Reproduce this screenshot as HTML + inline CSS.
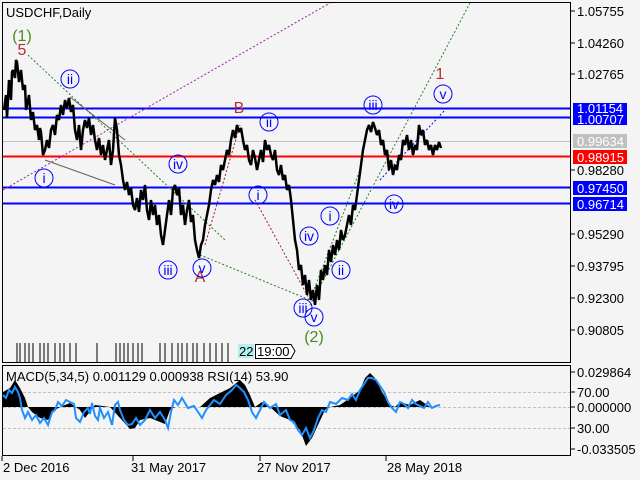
<!DOCTYPE html>
<html><head><meta charset="utf-8"><style>
html,body{margin:0;padding:0;background:#f4f4f4;}
svg{display:block;font-family:"Liberation Sans",sans-serif;}
</style></head><body>
<svg width="640" height="480" viewBox="0 0 640 480" xmlns="http://www.w3.org/2000/svg">
<rect width="640" height="480" fill="#f4f4f4"/>
<rect x="2.5" y="2.5" width="568" height="360" fill="none" stroke="#000"/>
<rect x="2.5" y="365.5" width="568" height="90" fill="none" stroke="#000"/>
<line x1="3" x2="570" y1="141.5" y2="141.5" stroke="#c0c0c0"/>
<line x1="3" x2="570" y1="108.5" y2="108.5" stroke="#0000ff" stroke-width="2"/>
<line x1="3" x2="570" y1="117.5" y2="117.5" stroke="#0000ff" stroke-width="2"/>
<line x1="3" x2="570" y1="156.5" y2="156.5" stroke="#ff0000" stroke-width="2"/>
<line x1="3" x2="570" y1="187.5" y2="187.5" stroke="#0000ff" stroke-width="2"/>
<line x1="3" x2="570" y1="203.5" y2="203.5" stroke="#0000ff" stroke-width="2"/>
<g fill="none" stroke-dasharray="2,2">
<line x1="3" y1="190" x2="330" y2="3" stroke="#a020a0"/>
<line x1="28" y1="55" x2="225" y2="240" stroke="#208020"/>
<line x1="200" y1="255" x2="310" y2="300" stroke="#208020"/>
<line x1="310" y1="305" x2="470" y2="3" stroke="#208020"/>
<line x1="310" y1="300" x2="360" y2="170" stroke="#208020"/>
<line x1="380" y1="180" x2="445" y2="110" stroke="#0000ff"/>
<line x1="205" y1="245" x2="240" y2="125" stroke="#a02020"/>
<line x1="255" y1="200" x2="310" y2="300" stroke="#a02020"/>
</g>
<polyline points="45,160 115,185" stroke="#606060" fill="none"/>
<polyline points="70,97 125,140" stroke="#606060" fill="none"/>
<polyline fill="none" stroke="#000" stroke-width="2.5" stroke-linejoin="bevel" points="4,110 6,95 7,118 9,80 11,100 12,72 13,70 15,78 16,60 17,62 19,82 21,70 23,90 25,85 26,110 27,105 29,95 31,120 33,112 35,130 37,125 39,140 40,128 41,132 43,155 45,150 47,140 49,148 51,130 53,125 55,135 57,115 59,120 61,105 63,115 65,100 67,108 69,98 71,112 73,105 75,130 77,140 79,125 81,150 83,130 85,120 87,128 89,118 91,135 93,125 95,140 97,150 99,138 101,155 103,145 105,160 107,150 109,140 111,165 113,150 115,118 117,130 119,155 121,165 123,180 125,190 127,182 129,195 131,188 133,205 135,210 137,198 139,212 141,190 143,200 145,185 147,210 149,220 151,200 153,215 155,205 157,225 159,215 161,235 163,245 165,230 167,215 169,200 171,215 173,190 175,185 177,195 179,188 181,215 183,205 185,225 187,210 189,200 191,222 193,215 195,240 197,250 199,258 201,245 203,240 205,225 207,215 209,205 211,190 213,180 215,185 217,175 219,182 221,165 223,170 225,160 227,150 229,155 231,140 233,130 235,138 237,125 239,132 241,128 243,140 245,150 247,145 249,160 251,165 253,150 255,158 257,170 259,160 261,150 263,162 265,140 267,150 269,145 271,155 273,160 275,150 277,170 279,175 281,165 283,180 285,175 287,190 289,185 291,200 293,220 295,240 297,250 299,270 301,265 303,285 305,275 307,295 309,280 311,300 313,290 315,305 317,285 319,300 321,270 323,280 325,265 327,275 329,250 331,262 333,245 335,255 337,240 339,250 341,230 343,240 345,235 347,225 349,215 351,225 353,205 355,210 357,195 359,180 361,165 363,150 365,140 367,130 369,125 371,132 373,122 375,128 377,135 379,130 381,145 383,140 385,155 387,150 389,170 391,160 393,175 395,165 397,170 399,155 401,160 403,140 405,145 407,135 409,150 411,140 413,155 415,145 417,150 419,125 421,135 423,130 425,145 427,140 429,150 431,145 433,155 435,145 437,150 439,142 441,148"/>
<g font-size="16" text-anchor="middle">
<text x="22" y="41" fill="#4a8a20">(1)</text>
<text x="22" y="55" fill="#b03030">5</text>
<text x="239" y="113" fill="#b03030">B</text>
<text x="440" y="79" fill="#b03030">1</text>
<text x="200" y="282" fill="#b03030">A</text>
<text x="314" y="342" fill="#4a8a20">(2)</text>
</g>
<g fill="none" stroke="#0000ff">
<circle cx="44" cy="178" r="9"/><circle cx="70" cy="79" r="9"/><circle cx="178" cy="164" r="9"/>
<circle cx="168" cy="270" r="9"/><circle cx="202" cy="268" r="9"/><circle cx="258" cy="195" r="9"/>
<circle cx="269" cy="122" r="9"/><circle cx="309" cy="236" r="9"/><circle cx="303" cy="308" r="9"/>
<circle cx="314" cy="317" r="9"/><circle cx="341" cy="270" r="9"/><circle cx="330" cy="216" r="9"/>
<circle cx="373" cy="105" r="9"/><circle cx="394" cy="204" r="9"/><circle cx="443" cy="94" r="9"/>
</g>
<g font-size="14" fill="#0000ff" text-anchor="middle">
<text x="44" y="183">i</text><text x="70" y="84">ii</text><text x="178" y="169">iv</text>
<text x="168" y="275">iii</text><text x="202" y="273">v</text><text x="258" y="200">i</text>
<text x="269" y="127">ii</text><text x="309" y="241">iv</text><text x="303" y="313">iii</text>
<text x="314" y="322">v</text><text x="341" y="275">ii</text><text x="330" y="221">i</text>
<text x="373" y="110">iii</text><text x="394" y="209">iv</text><text x="443" y="99">v</text>
</g>
<text x="6" y="17" font-size="13">USDCHF,Daily</text>
<g stroke="#000">
<path d="M17 343V362M20 343V362M25 343V362M29 343V362M33 343V362M40 343V362M44 343V362M48 343V362M55 343V362M60 343V362M64 343V362M70 343V362M76 343V362M97 343V362M116 343V362M120 343V362M124 343V362M128 343V362M133 343V362M138 343V362M142 343V362M160 343V362M165 343V362M172 343V362M178 343V362M182 343V362M187 343V362M193 343V362M197 343V362M204 343V362M210 343V362M216 343V362M222 343V362M228 343V362"/>
</g>
<rect x="238" y="344" width="16" height="14" fill="#b0f0f0"/>
<text x="239" y="356" font-size="13">22</text>
<path d="M255.5 344.5H291L295 351L291 358.5H255.5Z" fill="#fff" stroke="#000"/>
<text x="257" y="356" font-size="13">19:00</text>
<g stroke="#000"><path d="M570 11H575M570 43H575M570 74H575M570 170H575M570 234H575M570 266H575M570 298H575M570 330H575M570 372H575M570 392H575M570 407H575M570 428H575M570 449H575"/></g>
<g font-size="13" fill="#000">
<text x="577" y="16">1.05755</text><text x="577" y="48">1.04260</text><text x="577" y="79">1.02765</text>
<text x="577" y="175">0.98280</text><text x="577" y="239">0.95290</text><text x="577" y="271">0.93795</text>
<text x="577" y="303">0.92300</text><text x="577" y="335">0.90805</text>
<text x="577" y="377">0.029864</text><text x="577" y="397">70.00</text><text x="577" y="412">0.000000</text>
<text x="577" y="433">30.00</text><text x="577" y="454">-0.033505</text>
</g>
<rect x="573" y="103" width="54" height="22" fill="#0000ff"/>
<g font-size="13" fill="#fff">
<text x="577" y="113">1.01154</text>
<text x="577" y="124">1.00707</text>
</g>
<rect x="573" y="134" width="54" height="14" fill="#c0c0c0"/><text x="577" y="146" font-size="13" fill="#fff">0.99634</text>
<rect x="573" y="150" width="54" height="14" fill="#ff0000"/><text x="577" y="162" font-size="13" fill="#fff">0.98915</text>
<rect x="573" y="181" width="54" height="14" fill="#0000ff"/><text x="577" y="193" font-size="13" fill="#fff">0.97450</text>
<rect x="573" y="197" width="54" height="14" fill="#0000ff"/><text x="577" y="209" font-size="13" fill="#fff">0.96714</text>
<g stroke="#c0c0c0" stroke-dasharray="3,2"><line x1="3" x2="570" y1="392.5" y2="392.5"/><line x1="3" x2="570" y1="407.5" y2="407.5"/><line x1="3" x2="570" y1="428.5" y2="428.5"/></g>
<text x="6" y="381" font-size="13">MACD(5,34,5) 0.001129 0.000938 RSI(14) 53.90</text>
<path fill="#000" d="M3 407L3 392L10 388L15 380L20 388L25 398L28 407L32 412L40 418L48 420L55 410L60 407L70 403L80 410L85 418L95 405L110 407L120 418L130 429L135 428L140 420L150 418L165 424L170 410L175 407L200 407L210 398L220 393L230 388L240 380L245 385L250 395L255 407L262 402L270 407L280 416L290 420L300 430L306 446L312 438L318 425L325 410L330 407L340 405L350 398L360 390L365 378L370 373L375 378L382 392L390 405L395 407L400 402L410 405L420 400L430 407Z"/>
<polyline fill="none" stroke="#1e90ff" stroke-width="2" points="3,395 6,398 9,390 12,393 15,387 18,392 20,398 22,410 25,418 28,412 32,420 36,415 40,423 44,418 48,425 52,412 55,410 58,402 62,406 66,400 70,402 74,404 76,418 80,422 84,412 88,408 90,414 92,403 95,416 98,420 100,408 104,418 108,412 112,425 115,405 118,402 120,410 124,420 128,425 132,424 136,418 140,425 145,420 150,410 155,418 160,412 165,420 168,428 171,412 174,400 178,405 182,398 188,408 194,406 198,412 202,418 206,410 210,405 214,400 220,404 226,395 232,390 236,385 240,388 244,392 248,400 252,412 256,418 260,410 264,402 270,408 276,404 280,415 286,410 290,420 294,422 298,430 302,435 306,428 310,438 314,430 318,418 322,410 326,412 330,402 336,404 342,398 348,400 352,394 356,400 360,390 364,384 368,378 372,378 376,380 380,386 384,392 388,402 392,408 396,412 400,402 404,404 408,408 412,400 416,404 420,406 424,408 428,402 432,408 436,406 440,405"/>
<g stroke="#000"><path d="M2 456V461M133 456V461M260 456V461M386 456V461"/></g>
<g font-size="13"><text x="3" y="472">2 Dec 2016</text><text x="131" y="472">31 May 2017</text><text x="257" y="472">27 Nov 2017</text><text x="387" y="472">28 May 2018</text></g>
</svg>
</body></html>
